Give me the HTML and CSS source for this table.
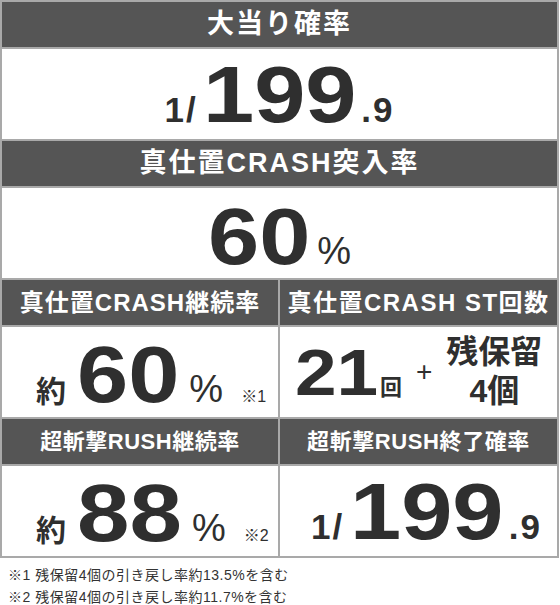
FILE: index.html
```html
<!DOCTYPE html>
<html lang="ja">
<head>
<meta charset="utf-8">
<link rel="stylesheet" href="styles.css">
</head>
<body>
<div class="table">
  <div class="hd span2 h1">大当り確率</div>
  <div class="val span2 v1">
    <span class="sm">1/</span><span class="big three">199</span><span class="sm dec">.9</span>
  </div>

  <div class="hd span2 h2">真仕置CRASH突入率</div>
  <div class="val span2 v2">
    <span class="big two">60</span><span class="pct">%</span>
  </div>

  <div class="hd h3l">真仕置CRASH継続率</div>
  <div class="hd h3r">真仕置CRASH ST回数</div>

  <div class="val v3l">
    <span class="yaku">約</span><span class="big two">60</span><span class="pct">%</span><span class="note">※1</span>
  </div>
  <div class="val v3r">
    <span class="g21"><span class="big two n21">21</span><span class="kai">回</span></span>
    <span class="plus">+</span>
    <span class="stack"><span>残保留</span><span>4個</span></span>
  </div>

  <div class="hd h4l">超斬撃RUSH継続率</div>
  <div class="hd h4r">超斬撃RUSH終了確率</div>

  <div class="val v4l">
    <span class="yaku">約</span><span class="big two b82">88</span><span class="pct">%</span><span class="note">※2</span>
  </div>
  <div class="val v4r">
    <span class="sm">1/</span><span class="big three">199</span><span class="sm dec">.9</span>
  </div>
</div>
<div class="notes">
  <p>※1 残保留4個の引き戻し率約13.5%を含む</p>
  <p>※2 残保留4個の引き戻し率約11.7%を含む</p>
</div>
</body>
</html>
```

FILE: styles.css
```css
* { box-sizing: border-box; }
body {
  margin: 0;
  background: #fff;
  font-family: "Liberation Sans", "Noto Sans CJK JP", sans-serif;
}
.table {
  width: 559px;
  display: grid;
  grid-template-columns: 276px 277px;
  grid-template-rows: 45px 90px 45px 90px 45px 90px 45px 90px;
  gap: 2px;
  padding: 2px;
  background: #a9a9a9;
}
.span2 { grid-column: 1 / 3; }
.hd {
  background: #555555;
  color: #fff;
  font-weight: bold;
  display: flex;
  align-items: center;
  justify-content: center;
  white-space: nowrap;
  line-height: 1;
}
.h1 { font-size: 27px; letter-spacing: 2px; }
.h2 { font-size: 27px; letter-spacing: 2px; }
.h3l { font-size: 24px; letter-spacing: 1px; }
.h3r { font-size: 24px; letter-spacing: 1.5px; }
.h4l { font-size: 22px; letter-spacing: 0.5px; }
.h4r { font-size: 22px; letter-spacing: 0.6px; }

.val {
  background: #fff;
  color: #2f2f2f;
  display: flex;
  align-items: baseline;
  justify-content: center;
  font-weight: bold;
  white-space: nowrap;
}
.val span { line-height: 1; }
.big {
  display: inline-block;
  font-size: 80px;
  transform: scaleX(1.15);
  transform-origin: 0 0;
}
.big.three { margin-right: 0.25em; }
.big.two { margin-right: 0.167em; }
.b82 { font-size: 82px; }
.sm { font-size: 35px; letter-spacing: 2px; }
.dec { margin-left: 5px; }
.pct { font-size: 38px; font-weight: normal; margin-left: 8px; }
.yaku { font-family: "Noto Sans CJK JP", sans-serif; font-size: 30px; margin-right: 11px; }
.note { font-size: 16px; font-weight: normal; margin-left: 18px; }

.v1 { padding-top: 6px; padding-left: 0; }
.v1 .big { margin-left: 5px; }
.v2 { padding-top: 9px; }
.v2 .pct { margin-left: 7px; }
.v3l { justify-content: flex-start; padding-left: 34px; padding-top: 8px; }
.v3l .pct, .v4l .pct { margin-left: 10px; }
.v4l { justify-content: flex-start; padding-left: 34px; padding-top: 6px; }
.v4r { justify-content: flex-start; padding-left: 31px; padding-top: 6px; }
.v4r .big { margin-left: 6px; }

.v3r { align-items: center; }
.g21 { display: flex; align-items: baseline; }
.val .n21 { font-size: 65px; margin-right: 0.2em; }
.kai { font-family: "Noto Sans CJK JP", sans-serif; font-size: 22px; }
.plus { font-size: 28px; font-weight: normal; margin-left: 14px; }
.stack {
  display: flex;
  flex-direction: column;
  align-items: center;
  margin-left: 14px;
  font-size: 32px;
}
.val .stack span { line-height: 39px; }

.notes {
  padding: 6px 0 0 8px;
  color: #333;
  font-size: 14px;
  line-height: 22px;
  letter-spacing: 0.5px;
}
.notes p { margin: 0; }
```
